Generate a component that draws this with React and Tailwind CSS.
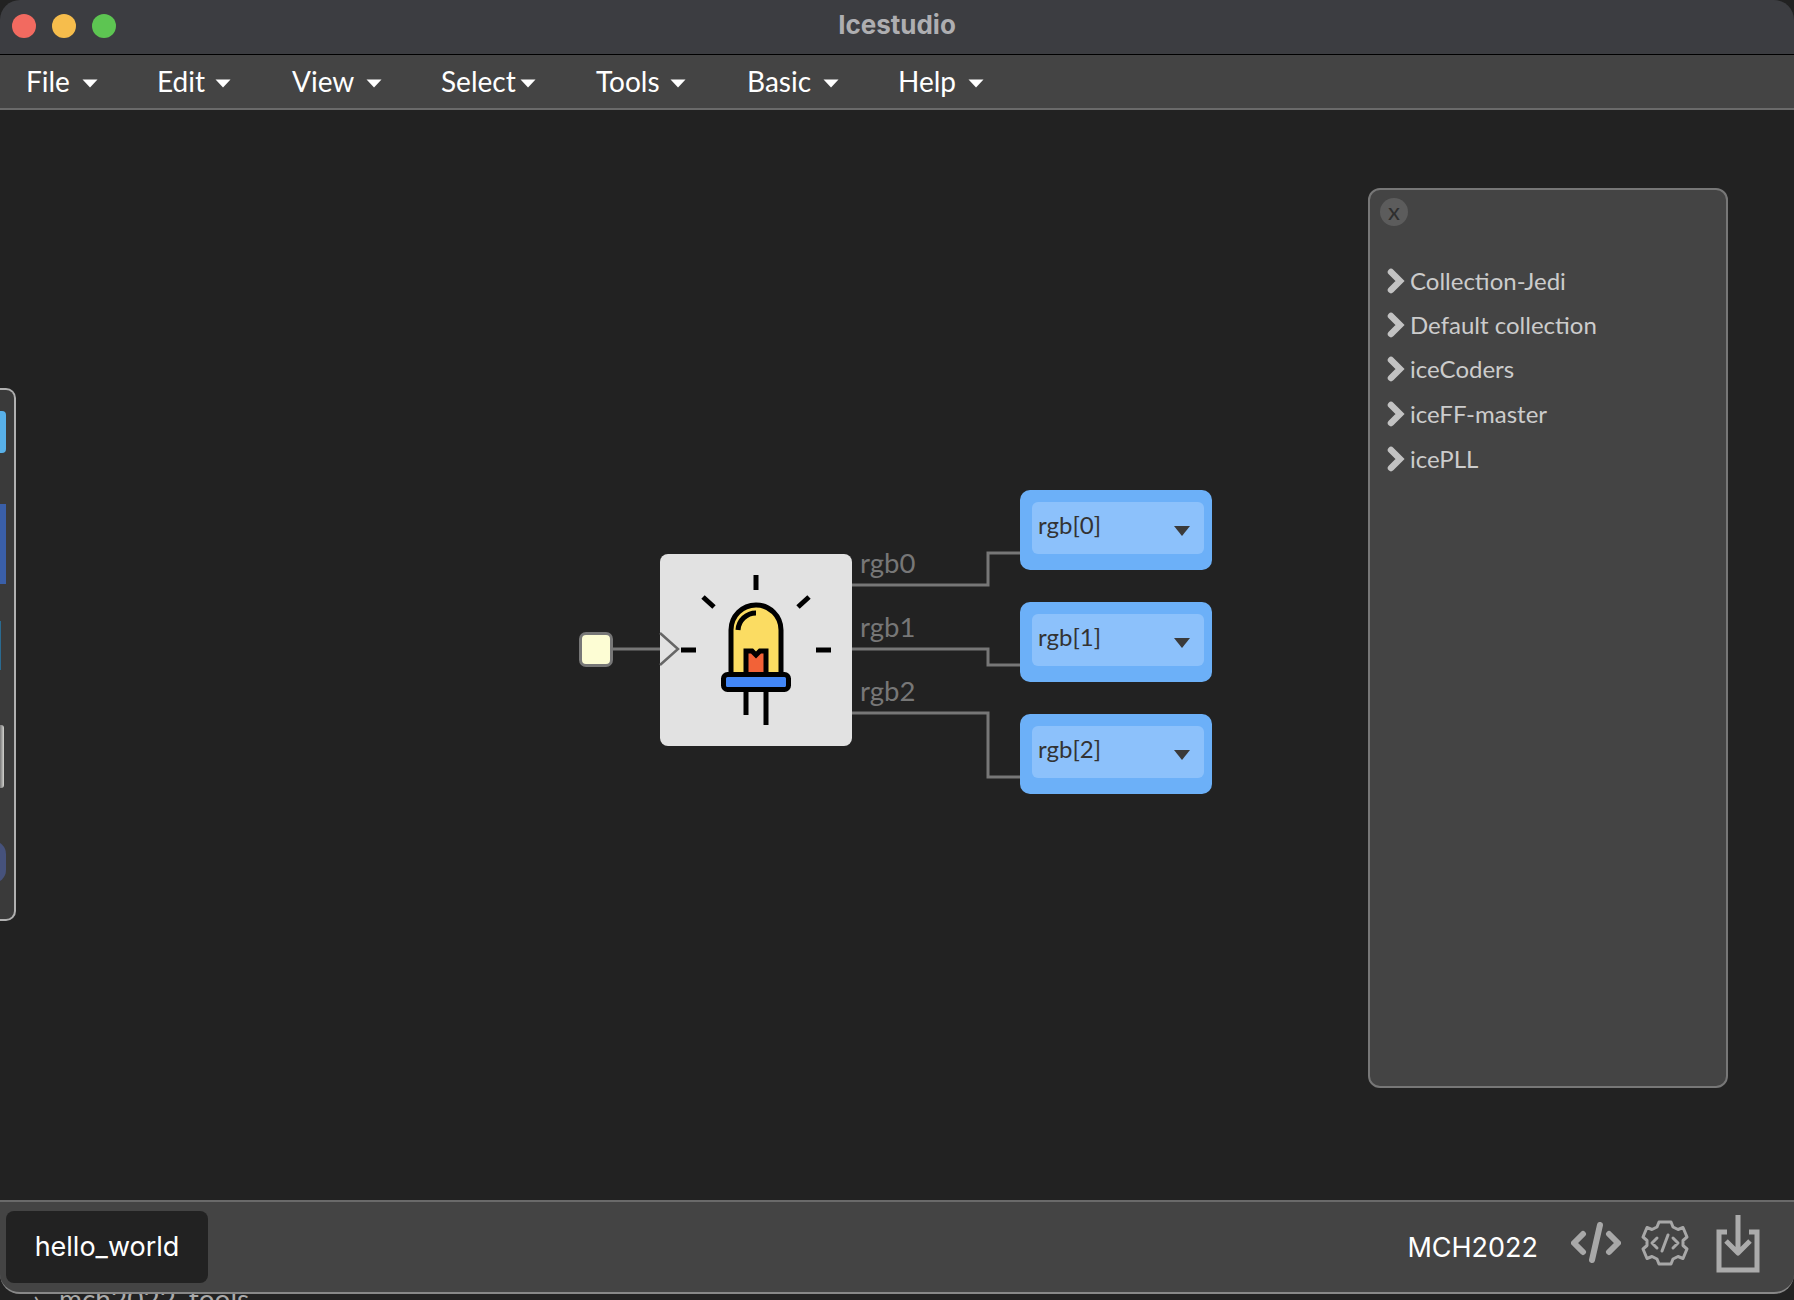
const lato = { fontFamily: '"Lato", "Liberation Sans", sans-serif' };

function Caret({ className = "" }) {
  return (
    <svg width="16" height="9" viewBox="0 0 16 9" className={className}>
      <path d="M0.5 0.5H15.5L8 8.5Z" fill="#ffffff" />
    </svg>
  );
}

const menus = [
  ["File", "w-[131px]", "ml-[12px]"],
  ["Edit", "w-[135px]", "ml-[10px]"],
  ["View", "w-[149px]", "ml-[12px]"],
  ["Select", "w-[155px]", "ml-[4px]"],
  ["Tools", "w-[151px]", "ml-[10px]"],
  ["Basic", "w-[151px]", "ml-[12px]"],
  ["Help", "w-[120px]", "ml-[12px]"],
];

function LedIcon() {
  return (
    <svg width="192" height="192" viewBox="0 0 192 192" fill="none" stroke="#000" strokeWidth="5">
      <path d="M96 21V36M43 43L54 53M149 43L138 53M21 96H36M156 96H171" />
      <path d="M71 120V76A25 25 0 0 1 121 76V120" fill="#fbdc62" />
      <path d="M96 59A18 18 0 0 0 78 76" />
      <path d="M86 120V97H92L96 101L100 97H106V120" fill="#f26237" />
      <rect x="63.5" y="120.5" width="65" height="15" rx="4" fill="#4286f6" />
      <path d="M86 138V161M106 138V171" />
    </svg>
  );
}

function Wires() {
  return (
    <svg className="absolute inset-0 pointer-events-none" width="1794" height="1090" fill="none" stroke="#777" strokeWidth="3">
      <path d="M613 539H660" />
      <path d="M660 523L678 539L660 555" strokeWidth="2.5" stroke="#666" />
      <path d="M852 475H988V443H1020" />
      <path d="M852 539H988V555H1020" />
      <path d="M852 603H988V667H1020" />
    </svg>
  );
}

function OutputPin({ label, top }) {
  return (
    <div className={`absolute left-[1020px] ${top} w-[192px] h-[80px] rounded-[10px] bg-[#6cb0f8] p-[12px] pr-[8px]`}>
      <div className="flex h-[52px] items-start justify-between rounded-[6px] bg-[#8cc1fb] pl-[6px] pr-[14px]">
        <span className="text-[24px] leading-[30px] mt-[8px] text-[#333333]">{label}</span>
        <svg width="16" height="10" viewBox="0 0 16 10" className="mt-[24px]">
          <path d="M0 0H16L8 10Z" fill="#3a3a3a" />
        </svg>
      </div>
    </div>
  );
}

function Chevron() {
  return (
    <svg width="18" height="26" viewBox="0 0 18 26" fill="none" stroke="#c2c2c2" strokeWidth="6.5" strokeLinecap="round" strokeLinejoin="miter">
      <path d="M4 4L13 13L4 22" />
    </svg>
  );
}

const collections = ["Collection-Jedi", "Default collection", "iceCoders", "iceFF-master", "icePLL"];

export default function App() {
  return (
    <div className="h-[1300px] w-[1794px] overflow-hidden bg-[#222222] flex flex-col" style={lato}>
      <header className="relative h-[54px] shrink-0 flex items-center rounded-t-[20px] bg-[#3c3d41] pl-[12px] pb-[2px] gap-[16px]">
        <span className="w-[24px] h-[24px] rounded-full bg-[#f26a60]" />
        <span className="w-[24px] h-[24px] rounded-full bg-[#f6bd4c]" />
        <span className="w-[24px] h-[24px] rounded-full bg-[#5dc552]" />
        <span className="absolute inset-x-0 top-[9px] text-center text-[26px] leading-[32px] font-bold text-[#aeaeb1]" style={{ fontFamily: '"Inter", sans-serif' }}>Icestudio</span>
      </header>
      <nav className="h-[56px] shrink-0 flex items-center border-t border-t-black border-b-2 border-b-[#6a6a6a] bg-[#444444] pl-[26px] pb-[2px]">
        {menus.map(([name, w, gap]) => (
          <div key={name} className={`flex items-center ${w}`}>
            <span className="text-[28px] text-white">{name}</span>
            <Caret className={`${gap} mt-[6px]`} />
          </div>
        ))}
      </nav>
      <main className="relative flex-1">
        <div className="absolute left-[579px] top-[522px] w-[34px] h-[35px] rounded-[7px] border-[3px] border-[#777777] bg-[#fdfdd4]" />
        <div className="absolute left-[660px] top-[444px] w-[192px] h-[192px] rounded-[8px] bg-[#e2e2e2]">
          <LedIcon />
        </div>
        <Wires />
        {[["rgb0", "top-[436px]"], ["rgb1", "top-[500px]"], ["rgb2", "top-[564px]"]].map(([l, t]) => (
          <span key={l} className={`absolute left-[860px] ${t} text-[27.5px] leading-[33px] text-[#777777]`}>{l}</span>
        ))}
        <OutputPin label="rgb[0]" top="top-[380px]" />
        <OutputPin label="rgb[1]" top="top-[492px]" />
        <OutputPin label="rgb[2]" top="top-[604px]" />

        <aside className="absolute left-0 top-[278px] w-[16px] h-[533px] rounded-r-[10px] border-2 border-l-0 border-[#b0b0b0] bg-[#3a3a3a] overflow-hidden">
          <div className="absolute left-0 top-[21px] w-[6px] h-[42px] rounded-r-[4px] bg-[#58b0e8]" />
          <div className="absolute left-0 top-[114px] w-[6px] h-[80px] bg-[#3a5fa8]" />
          <div className="absolute left-0 top-[231px] w-[1px] h-[49px] bg-[#2a6a90]" />
          <div className="absolute left-0 top-[335px] w-[4px] h-[63px] rounded-r-[3px] bg-gradient-to-r from-[#777777] to-[#d4d4d0]" />
          <div className="absolute -left-[20px] top-[451px] w-[26px] h-[42px] rounded-full bg-[#46527c]" />
        </aside>

        <aside className="absolute left-[1368px] top-[78px] w-[360px] h-[900px] rounded-[12px] border-2 border-[#777777] bg-[#444444] pl-[10px] pt-[8px]">
          <div className="w-[28px] h-[28px] flex items-center justify-center rounded-full bg-[#5c5c5c] text-[24px] leading-none text-[#2e2e2e] pb-[3px]">x</div>
          <ul className="mt-[33px] ml-[7px] flex flex-col">
            {collections.map((c, i) => (
              <li key={c} className={`h-[44.2px] flex items-center gap-[5px] text-[24px] text-[#cccccc] ${i === 4 ? "mt-[1px]" : ""}`}>
                <Chevron />
                <span>{c}</span>
              </li>
            ))}
          </ul>
        </aside>
      </main>
      <footer className="h-[94px] shrink-0 flex items-center rounded-b-[20px] border-t-2 border-b-2 border-t-[#6a6a6a] border-b-[#888888] bg-[#444444] pl-[6px] pr-[34px]" style={{ fontFamily: '"Inter", sans-serif' }}>
        <div className="w-[202px] h-[72px] flex items-center justify-center rounded-[8px] bg-[#222222] text-[27px] text-white">hello_world</div>
        <span className="ml-auto text-[27px] mt-[2px] text-white">MCH2022</span>
        <svg className="ml-[33px] -mt-[8px]" width="50" height="42" viewBox="0 0 50 42" fill="none" stroke="#a8a8a8" strokeWidth="6" strokeLinecap="round" strokeLinejoin="round">
          <path d="M12 12L3 21L12 30M38 12L47 21L38 30M29 3L21 38" />
        </svg>
        <svg className="ml-[19px] -mt-[8px]" width="50" height="50" viewBox="0 0 50 50" fill="none" stroke="#a8a8a8" strokeWidth="3" strokeLinecap="round" strokeLinejoin="round">
          <path d="M19 4L31 4L33 9L38 11.5L43 9.5L47 19L43 22.5V27.5L47 31L43 40.5L38 38.5L33 41L31 46H19L17 41L12 38.5L7 40.5L3 31L7 27.5V22.5L3 19L7 9.5L12 11.5L17 9Z" />
          <path d="M17 20L12 25L17 30M33 20L38 25L33 30M28 17L22 33" />
        </svg>
        <svg className="ml-[26px] -mt-[7px]" width="44" height="58" viewBox="0 0 44 58" fill="none" stroke="#ababab" strokeWidth="5">
          <path d="M11 17H3V55H41V17H33" />
          <path d="M22 0V36M10 26L22 38L34 26" strokeLinejoin="round" />
        </svg>
      </footer>
      <div className="h-[6px] overflow-hidden text-[#aaaaaa] text-[28px] leading-none pl-[33px]">
        <div className="-mt-[9px] flex gap-[18px]"><span>›</span><span>mch2022_tools</span></div>
      </div>
    </div>
  );
}
